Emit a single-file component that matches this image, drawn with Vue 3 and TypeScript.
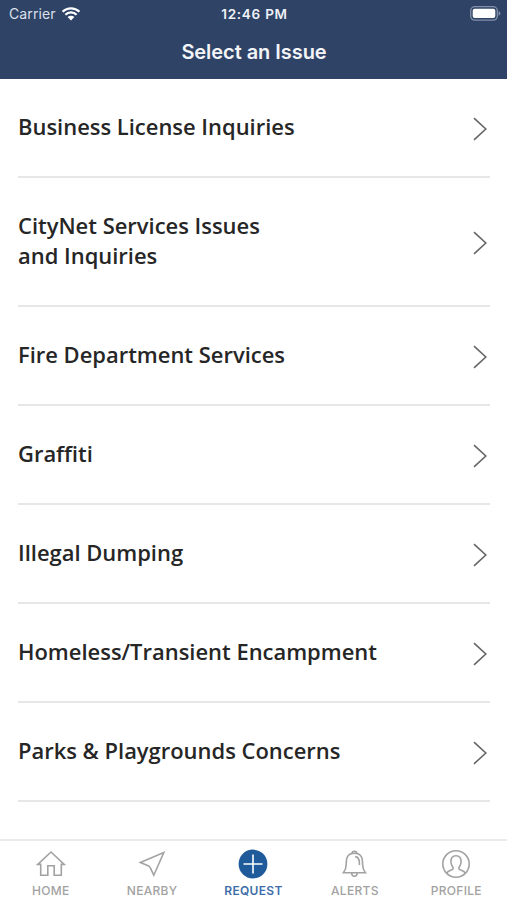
<script setup lang="ts">
interface Issue {
  id: number
  lines: string[]
}

const issues: Issue[] = [
  { id: 1, lines: ['Business License Inquiries'] },
  { id: 2, lines: ['CityNet Services Issues', 'and Inquiries'] },
  { id: 3, lines: ['Fire Department Services'] },
  { id: 4, lines: ['Graffiti'] },
  { id: 5, lines: ['Illegal Dumping'] },
  { id: 6, lines: ['Homeless/Transient Encampment'] },
  { id: 7, lines: ['Parks & Playgrounds Concerns'] },
]

const tabs = ['home', 'nearby', 'request', 'alerts', 'profile'] as const
const active = 'request'
</script>

<template>
  <div class="screen">
    <header class="header">
      <div class="status">
        <div class="carrier">
          <span>Carrier</span>
          <svg class="wifi" width="18" height="14" viewBox="0 0 18 14">
            <path d="M0.6 4.8a12 12 0 0 1 16.8 0" />
            <path d="M3.4 7.7a8 8 0 0 1 11.2 0" />
            <path class="dot" d="M5.6 10.1a4.9 4.9 0 0 1 6.8 0L9 13.6z" />
          </svg>
        </div>
        <span class="clock">12:46 PM</span>
        <svg class="battery" width="31" height="15" viewBox="0 0 31 15">
          <rect class="case" x="0.7" y="0.7" width="26.6" height="13.4" rx="4" />
          <rect class="charge" x="2.7" y="2.8" width="22.6" height="9.2" rx="2" />
          <path class="tip" d="M28.6 5.1q1.8 .6 1.8 2.3t-1.8 2.3z" />
        </svg>
      </div>
      <h1 class="title">Select an Issue</h1>
    </header>

    <main class="list">
      <button v-for="issue in issues" :key="issue.id" class="row" type="button">
        <span class="label">
          <span v-for="line in issue.lines" :key="line" class="line">{{ line }}</span>
        </span>
        <svg class="chevron" width="16" height="24" viewBox="0 0 16 24">
          <path d="M2 1.2L13.8 12L2 22.8" />
        </svg>
      </button>
    </main>

    <nav class="tabs">
      <button v-for="tab in tabs" :key="tab" class="tab" :class="{ active: tab === active }" type="button">
        <svg class="icon" width="30" height="30" viewBox="0 0 30 30">
          <g v-if="tab === 'home'">
            <path d="M1.8 15.4L15 3L28.2 15.4H25.3V26.2H18.2V16.8H11.8V26.2H4.7V15.4Z" />
          </g>
          <g v-else-if="tab === 'nearby'">
            <path d="M3.3 13.5L26.8 3.5L16.8 26.2L13.2 18.6Q12.6 17.2 11.2 16.7Z" />
          </g>
          <g v-else-if="tab === 'request'">
            <circle class="disc" cx="15" cy="15" r="14.4" />
            <path class="plus" d="M15 5.5V24.5M5.5 15H24.5" />
          </g>
          <g v-else-if="tab === 'alerts'">
            <path d="M3.4 23.7C5.7 20.8 6.2 19.5 6.2 15.5C6.2 8.8 7.4 4.3 14.4 4.3S22.6 8.8 22.6 15.5C22.6 19.5 23.1 20.8 25.4 23.7Z" />
            <path d="M12 4.7a2.4 2.5 0 0 1 4.8 0M11.7 24a2.7 3.3 0 0 0 5.4 0" />
            <path d="M15.2 7.6c2.8 .2 4.1 2.3 4.2 6.2v2.3" />
          </g>
          <g v-else>
            <circle cx="15" cy="15" r="13.2" />
            <path d="M5.7 24.2C6.8 21.2 12.2 21.4 12.2 19.4C12.2 17.8 9.9 16.5 9.9 12.7C9.9 9.1 11.6 6.7 15 6.7S20.1 9.1 20.1 12.7C20.1 16.5 17.8 17.8 17.8 19.4C17.8 21.4 23.2 21.2 24.3 24.2" />
          </g>
        </svg>
        <span class="name">{{ tab.toUpperCase() }}</span>
      </button>
    </nav>
  </div>
</template>

<style>
body {
  margin: 0;
  background: #fff;
}
</style>

<style scoped>
.screen {
  display: flex;
  flex-direction: column;
  width: 100%;
  height: 900px;
  overflow: hidden;
  background: #fff;
  font-family: Inter, "Liberation Sans", sans-serif;
}

.header {
  box-sizing: border-box;
  flex: none;
  height: 79px;
  background: #2f4367;
  color: #fff;
}

.status {
  display: grid;
  grid-template-columns: 1fr auto 1fr;
  align-items: center;
  height: 27px;
  padding: 0 6px 0 9px;
}

.carrier {
  display: flex;
  align-items: center;
  gap: 6px;
  font-size: 14px;
  line-height: 26px;
  letter-spacing: 0.1px;
  color: #dbe0ea;
}

.wifi {
  margin-bottom: 1px;
}

.wifi path {
  fill: none;
  stroke: #fff;
  stroke-width: 2.3;
}

.wifi .dot {
  fill: #fff;
  stroke: none;
}

.clock {
  margin-right: 1px;
  font-size: 13.5px;
  font-weight: 600;
  line-height: 28px;
  letter-spacing: 0.75px;
  color: #eef1f6;
}

.battery {
  justify-self: end;
  margin-bottom: 1px;
}

.case {
  fill: none;
  stroke: #8390a8;
  stroke-width: 1.3;
}

.charge {
  fill: #fff;
}

.tip {
  fill: #8390a8;
}

.title {
  margin: 0;
  padding-left: 1px;
  text-align: center;
  font-size: 20px;
  font-weight: 600;
  line-height: 50px;
  letter-spacing: -0.05px;
  color: #f3f5f9;
}

.list {
  flex: 1;
  min-height: 0;
  overflow: hidden;
  padding: 0 17px 0 18px;
}

.row {
  box-sizing: border-box;
  display: flex;
  align-items: center;
  justify-content: space-between;
  width: 100%;
  padding: 33px 2px 34px 0;
  border: 0;
  border-bottom: 2px solid #e7e7e7;
  background: none;
  text-align: left;
}

.label {
  font-family: "Open Sans", "Noto Sans", sans-serif;
  font-size: 21.95px;
  font-weight: 600;
  line-height: 30px;
  color: #262626;
}

.line {
  display: block;
}

.chevron {
  flex: none;
  margin: 3px 0 -1px;
}

.chevron path {
  fill: none;
  stroke: #666;
  stroke-width: 1.6;
}

.tabs {
  box-sizing: border-box;
  flex: none;
  display: grid;
  grid-template-columns: repeat(5, 1fr);
  height: 61px;
  border-top: 2px solid #ebebeb;
  background: #fff;
}

.tab {
  display: flex;
  flex-direction: column;
  align-items: center;
  padding: 8px 0 0;
  border: 0;
  background: none;
  color: #a2a2a2;
  font-family: inherit;
}

.icon path,
.icon circle {
  fill: none;
  stroke: currentColor;
  stroke-width: 1.6;
}

.icon .disc {
  fill: #1f5a9b;
  stroke: none;
}

.icon .plus {
  stroke: #fff;
}

.name {
  margin-top: 4px;
  font-size: 12px;
  font-weight: 500;
  line-height: 16px;
  letter-spacing: 0.3px;
}

.active {
  color: #3e6ea8;
}

.active .name {
  font-weight: 600;
}
</style>
